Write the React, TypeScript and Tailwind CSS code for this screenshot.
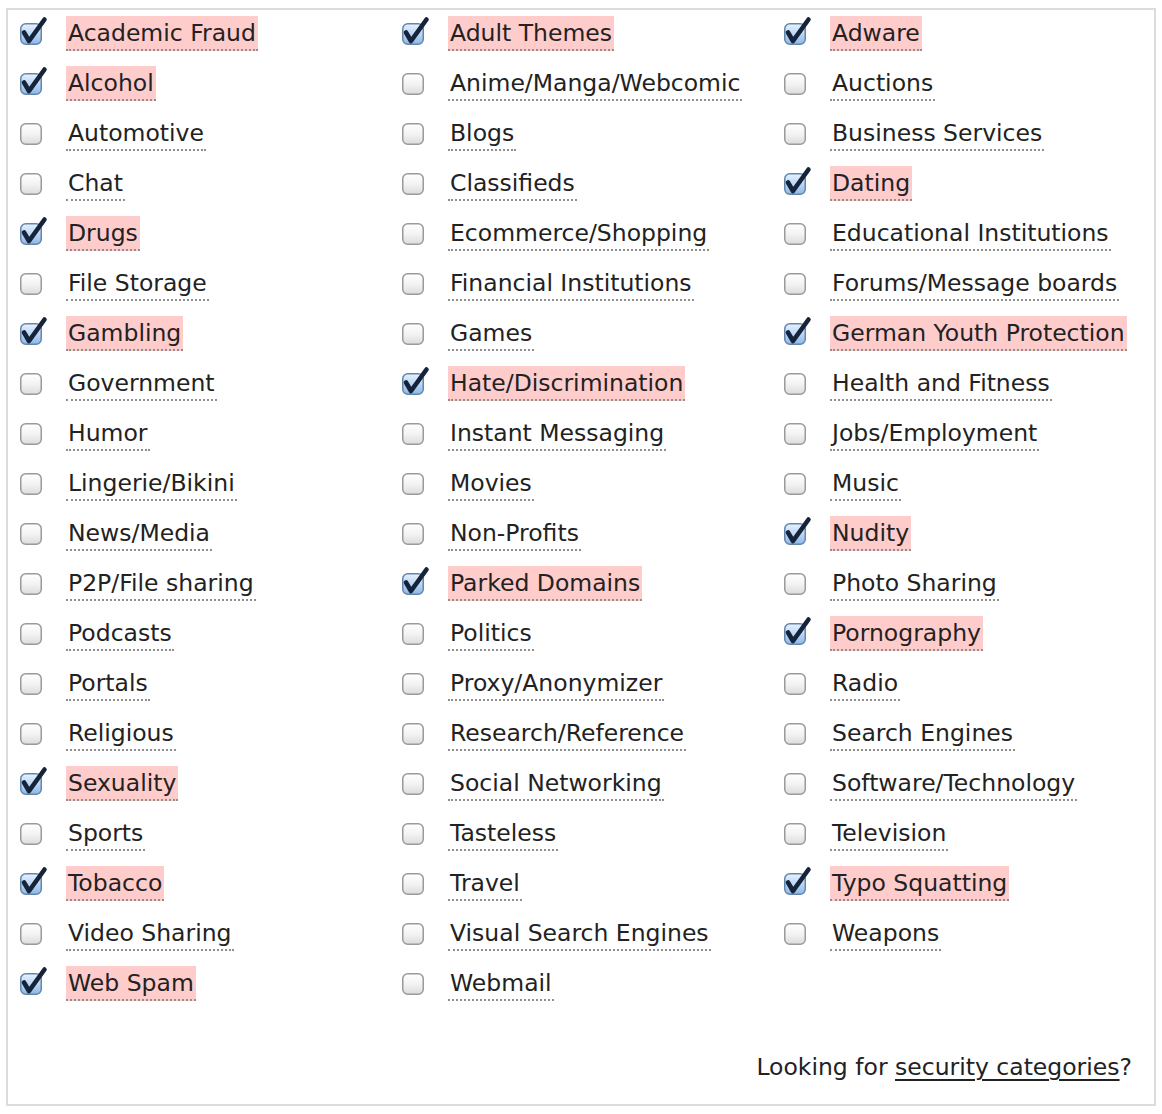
import React from "react";

type Item = [string, boolean];

const col1: Item[] = [
  ["Academic Fraud", true], ["Alcohol", true], ["Automotive", false], ["Chat", false], ["Drugs", true],
  ["File Storage", false], ["Gambling", true], ["Government", false], ["Humor", false], ["Lingerie/Bikini", false],
  ["News/Media", false], ["P2P/File sharing", false], ["Podcasts", false], ["Portals", false], ["Religious", false],
  ["Sexuality", true], ["Sports", false], ["Tobacco", true], ["Video Sharing", false], ["Web Spam", true],
];
const col2: Item[] = [
  ["Adult Themes", true], ["Anime/Manga/Webcomic", false], ["Blogs", false], ["Classifieds", false], ["Ecommerce/Shopping", false],
  ["Financial Institutions", false], ["Games", false], ["Hate/Discrimination", true], ["Instant Messaging", false], ["Movies", false],
  ["Non-Profits", false], ["Parked Domains", true], ["Politics", false], ["Proxy/Anonymizer", false], ["Research/Reference", false],
  ["Social Networking", false], ["Tasteless", false], ["Travel", false], ["Visual Search Engines", false], ["Webmail", false],
];
const col3: Item[] = [
  ["Adware", true], ["Auctions", false], ["Business Services", false], ["Dating", true], ["Educational Institutions", false],
  ["Forums/Message boards", false], ["German Youth Protection", true], ["Health and Fitness", false], ["Jobs/Employment", false], ["Music", false],
  ["Nudity", true], ["Photo Sharing", false], ["Pornography", true], ["Radio", false], ["Search Engines", false],
  ["Software/Technology", false], ["Television", false], ["Typo Squatting", true], ["Weapons", false],
];

function Box({ checked, id }: { checked: boolean; id: string }) {
  return (
    <svg width="30" height="32" viewBox="0 0 30 32" className="shrink-0 overflow-visible">
      <defs>
        <linearGradient id={`u${id}`} x1="0" y1="0" x2="0" y2="1">
          <stop offset="0" stopColor="#ffffff" />
          <stop offset="0.5" stopColor="#f3f3f3" />
          <stop offset="1" stopColor="#dcdcdc" />
        </linearGradient>
        <linearGradient id={`c${id}`} x1="0" y1="0" x2="0" y2="1">
          <stop offset="0" stopColor="#e6f1ff" />
          <stop offset="0.5" stopColor="#bcd7f4" />
          <stop offset="1" stopColor="#8db7e6" />
        </linearGradient>
      </defs>
      <rect
        x="0.75"
        y="6.75"
        width="20.5"
        height="20.5"
        rx="5"
        fill={checked ? `url(#c${id})` : `url(#u${id})`}
        stroke={checked ? "#6586ab" : "#9a9a9a"}
        strokeWidth="1.5"
      />
      {checked && (
        <path
          d="M4 15.5 L9 24 L24.5 2.5"
          fill="none"
          stroke="#15233b"
          strokeWidth="4.6"
          strokeLinecap="round"
          strokeLinejoin="round"
        />
      )}
    </svg>
  );
}

function Cell({ item, id }: { item?: Item; id: string }) {
  if (!item) return <div className="h-[50px]" />;
  const [label, checked] = item;
  return (
    <div className="h-[50px] flex items-center">
      <div className="w-[46px] flex items-center">
        <Box checked={checked} id={id} />
      </div>
      <span
        className={`inline-block px-[2px] pt-[1px] leading-[32px] border-b-2 border-dotted border-[#8f8f8f] whitespace-nowrap text-[#222] ${
          checked ? "bg-[#ffcccc]" : ""
        }`}
      >
        {label}
      </span>
    </div>
  );
}

export default function App() {
  const rows = Array.from({ length: 20 }, (_, i) => i);
  return (
    <div
      className="w-[1162px] h-[1114px] bg-white pt-[8px] pl-[6px] text-[23.5px]"
      style={{ fontFamily: '"DejaVu Sans", Verdana, sans-serif' }}
    >
      <div className="w-[1150px] h-[1098px] border-2 border-[#dcdcdc] pl-[12px] flex flex-col">
        <div className="grid grid-cols-[382px_382px_382px] -mt-[2px]">
          {rows.map((i) => (
            <React.Fragment key={i}>
              <Cell item={col1[i]} id={`a${i}`} />
              <Cell item={col2[i]} id={`b${i}`} />
              <Cell item={col3[i]} id={`d${i}`} />
            </React.Fragment>
          ))}
        </div>
        <div className="mt-[42px] pr-[22px] text-right leading-[34px] text-[#222]">
          Looking for <a className="underline underline-offset-[4px] decoration-[2px]">security categories</a>?
        </div>
      </div>
    </div>
  );
}
